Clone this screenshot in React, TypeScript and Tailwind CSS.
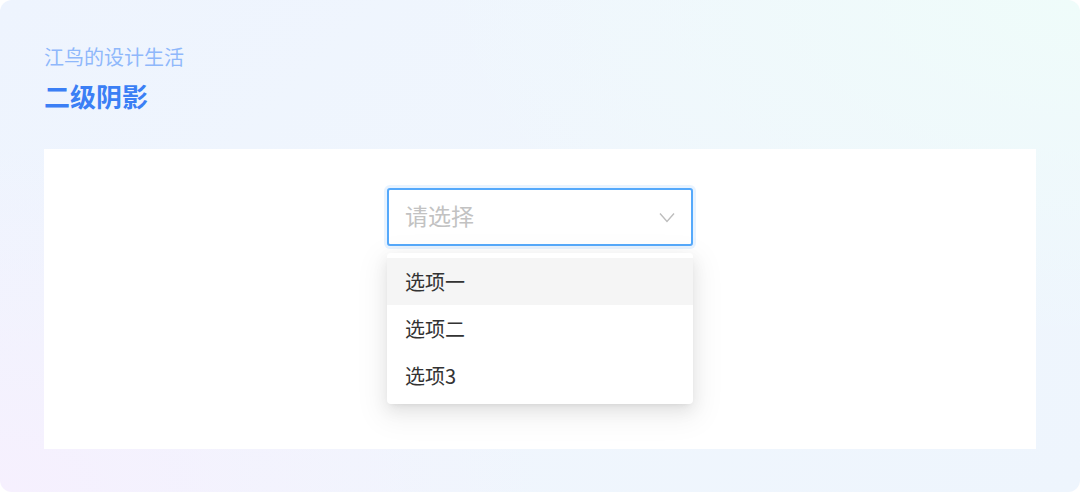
export default function App() {
  const options = ['选项一', '选项二', '选项3']

  return (
    <div className="h-[493px] w-[1080px] bg-white font-['Noto_Sans_CJK_SC','Noto_Sans',sans-serif]">
      <div className="flex h-[492px] flex-col rounded-[12px] bg-[radial-gradient(ellipse_60%_70%_at_100%_0%,#effcfa_0%,rgba(239,252,250,0)_100%),radial-gradient(ellipse_50%_70%_at_0%_100%,#f6f0fe_0%,rgba(246,240,254,0)_100%),linear-gradient(135deg,#eef4fe_0%,#f0f6fd_50%,#eef5fd_100%)] px-[44px] pt-[44px]">
        {/* Header */}
        <div className="text-[20px] leading-[26px] text-[#8fb8fb]">江鸟的设计生活</div>
        <div className="mt-[9px] text-[26px] font-bold leading-[34px] text-[#3b7ff5]">二级阴影</div>

        {/* Panel */}
        <div className="mt-[36px] flex h-[300px] justify-center bg-white pt-[39px]">
          <div className="relative h-[58px] w-[306px]">
            <div className="flex h-full items-center justify-between rounded-[3px] border-2 border-[#55a9fb] bg-white pl-[16px] pr-[16px] shadow-[0_0_0_3px_rgba(90,170,255,0.14)]">
              <span className="mb-[3px] text-[23px] leading-none text-[#c2c2c2]">请选择</span>
              <svg width="16" height="11" viewBox="0 0 16 11" fill="none">
                <polyline points="1,1.5 8,9.5 15,1.5" stroke="#bdbdbd" strokeWidth="1.4" />
              </svg>
            </div>

            {/* Dropdown */}
            <div className="absolute left-0 top-[65px] w-[306px] rounded-[4px] bg-white py-[5px] shadow-[0_6px_16px_rgba(0,0,0,0.08),0_3px_6px_-4px_rgba(0,0,0,0.12),0_9px_28px_8px_rgba(0,0,0,0.05)]">
              {options.map((o, i) => (
                <div
                  key={o}
                  className={`flex h-[47px] items-center pl-[18px] text-[20px] text-[#333333] ${i === 0 ? 'bg-[#f5f5f5]' : ''}`}
                >
                  {o}
                </div>
              ))}
            </div>
          </div>
        </div>
      </div>
    </div>
  )
}
